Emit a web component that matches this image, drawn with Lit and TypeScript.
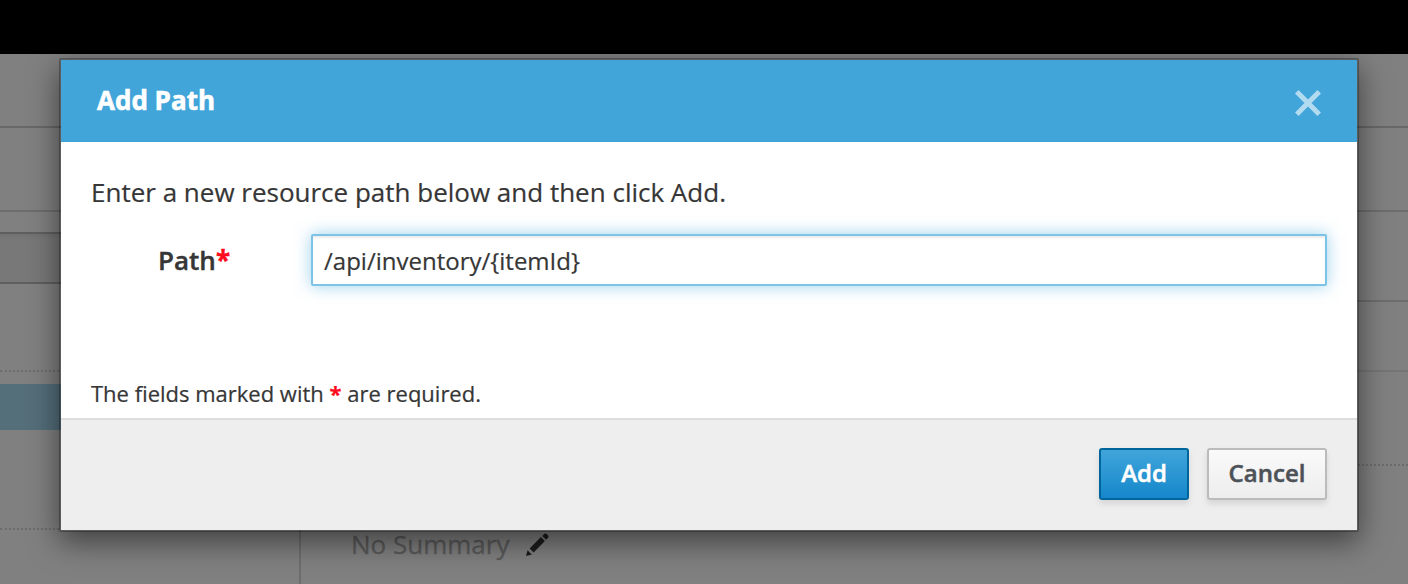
import { LitElement, html, css } from "lit";
import { customElement, property } from "lit/decorators.js";

@customElement("editor-backdrop")
class EditorBackdrop extends LitElement {
  static styles = css`
    :host { display: flex; flex-direction: column; height: 100%; background: #808080; }
    * { box-sizing: border-box; }
    .masthead { height: 54px; background: #000; flex: none; }
    .crumbs { height: 74px; border-bottom: 2px solid #686868; flex: none; }
    .title { height: 84px; border-bottom: 2px solid #6d6d6d; flex: none; }
    .columns { display: grid; grid-template-columns: 301px 1fr; flex: 1; min-height: 0; }
    .side { border-right: 2px solid #6d6d6d; padding-top: 20px; }
    .section { height: 52px; background: linear-gradient(#727272, #787878 6px); border: solid #5f5f5f; border-width: 2px 0; }
    .item { height: 88px; border-bottom: 2px dotted #6c6c6c; }
    .active { height: 46px; margin-top: 12px; background: #546e7a; }
    .item.tall { height: 100px; }
    .rule { height: 90px; border-bottom: 2px solid #6d6d6d; }
    .rule.faint { height: 70px; border-bottom-color: #757575; }
    .rule.dots { height: 94px; border-bottom: 2px dotted #6c6c6c; }
    .summary { display: flex; align-items: center; padding: 58px 0 0 50px; font-size: 26px; line-height: 40px; color: #5a5a5a; white-space: nowrap; -webkit-text-stroke: 0.3px; }
    .pencil { width: 23px; height: 23px; margin-left: 17px; display: block; }
  `;
  render() {
    return html`
      <div class="masthead"></div>
      <div class="crumbs"></div>
      <div class="title"></div>
      <div class="columns">
        <div class="side">
          <div class="section"></div>
          <div class="item"></div>
          <div class="active"></div>
          <div class="item tall"></div>
        </div>
        <div>
          <div class="rule"></div>
          <div class="rule faint"></div>
          <div class="rule dots"></div>
          <div class="summary">
            <span>No Summary</span>
            <svg class="pencil" viewBox="0 0 23 23" fill="#1c1c1c">
              <path d="M0 23L1.6 17.2L5.8 21.4Z" />
              <path d="M3.6 15.4L14.9 4.1L18.9 8.1L7.6 19.4Z" />
              <path d="M16.3 2.9L18.4.8Q19.4 0 20.3.8L22.3 2.8Q23 3.7 22.2 4.6L20.1 6.7Z" />
            </svg>
          </div>
        </div>
      </div>
    `;
  }
}

@customElement("path-dialog")
class PathDialog extends LitElement {
  @property() value = "/api/inventory/{itemId}";

  static styles = css`
    :host { display: block; }
    * { box-sizing: border-box; }
    .dialog { border: 2px solid rgba(0, 0, 0, 0.27); border-radius: 2px; background: #fff; background-clip: padding-box; box-shadow: 0 10px 30px rgba(0, 0, 0, 0.5); }
    .header { display: flex; align-items: center; justify-content: space-between; height: 82px; padding: 0 35px 0 36px; background: #41a5da; color: #fff; }
    .header h4 { margin: 0; padding-bottom: 2px; font-size: 26px; line-height: 40px; font-weight: 700; -webkit-text-stroke: 0.6px; }
    .close { width: 28px; height: 28px; margin-top: 3px; display: block; }
    .body { height: 276px; padding: 30px 30px 0; display: flex; flex-direction: column; -webkit-text-stroke: 0.2px; }
    .body p { margin: 0; font-size: 26px; line-height: 40px; }
    .row { display: grid; grid-template-columns: 200px 1016px; column-gap: 20px; margin-top: 22px; align-items: center; }
    .label { padding-left: 67px; font-size: 26px; line-height: 40px; font-weight: 600; -webkit-text-stroke: 0.4px; }
    .star { color: #ff0a1c; font-weight: 700; }
    .field { height: 52px; width: 100%; padding: 0 11px; border: 2px solid #7dc3e8; border-radius: 2px; background: #fff; color: #363636; font: 24px "Open Sans", sans-serif; outline: none; box-shadow: inset 0 2px 2px rgba(3, 3, 3, 0.075), 0 0 16px rgba(57, 165, 220, 0.5); -webkit-text-stroke: 0.2px; }
    .body .note { margin-top: 87px; font-size: 22px; line-height: 40px; }
    .footer { display: flex; justify-content: flex-end; gap: 18px; height: 112px; padding: 28px 30px 0; background: #eee; border-top: 2px solid #ddd; }
    .btn { height: 52px; padding: 0 0 2px; border: 2px solid #bbb; border-radius: 3px; background: linear-gradient(#fafafa, #ededed); color: #4d5258; font: 600 24px/44px "Open Sans", sans-serif; box-shadow: 0 4px 6px rgba(3, 3, 3, 0.1); width: 120px; -webkit-text-stroke: 0.5px; }
    .btn.primary { width: 90px; background: linear-gradient(#41a5da, #1587cb); border-color: #00659c; color: #fff; }
  `;
  render() {
    return html`
      <div class="dialog">
        <div class="header">
          <h4>Add Path</h4>
          <svg class="close" viewBox="0 0 28 28" stroke="#b3dbf0" stroke-width="5" stroke-linecap="butt">
            <path d="M2.8 2.8L25.2 25.2M25.2 2.8L2.8 25.2" />
          </svg>
        </div>
        <div class="body">
          <p>Enter a new resource path below and then click Add.</p>
          <div class="row">
            <label class="label" for="path">Path<span class="star">*</span></label>
            <input id="path" class="field" .value=${this.value} />
          </div>
          <p class="note">The fields marked with <span class="star">*</span> are required.</p>
        </div>
        <div class="footer">
          <button class="btn primary">Add</button>
          <button class="btn">Cancel</button>
        </div>
      </div>
    `;
  }
}

@customElement("app-root")
class AppRoot extends LitElement {
  static styles = css`
    :host { display: block; position: relative; width: 1408px; height: 584px; overflow: hidden; font-family: "Open Sans", sans-serif; color: #363636; }
    .modal { position: absolute; left: 59px; top: 58px; width: 1300px; }
  `;
  render() {
    return html`
      <editor-backdrop></editor-backdrop>
      <path-dialog class="modal"></path-dialog>
    `;
  }
}
